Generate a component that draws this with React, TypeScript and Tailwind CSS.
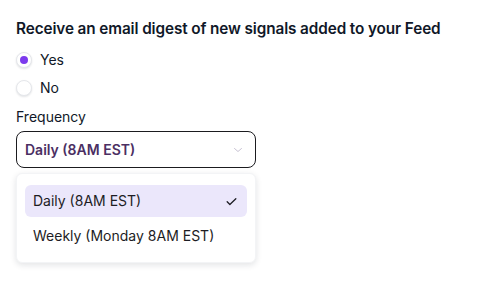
import { useState } from "react";

const options = ["Daily (8AM EST)", "Weekly (Monday 8AM EST)"];

export default function App() {
  const [enabled, setEnabled] = useState(true);
  const [frequency, setFrequency] = useState(options[0]);

  return (
    <div className="min-h-screen bg-white px-4 pt-[17px] font-['Inter',sans-serif] text-[#101828]">
      <h2 className="text-[15.3px] font-semibold leading-6 tracking-[-0.1px]">
        Receive an email digest of new signals added to your Feed
      </h2>

      {/* yes / no radios */}
      <div className="mt-[11px] flex flex-col gap-3">
        {[true, false].map((v) => (
          <label key={String(v)} className="flex h-4 cursor-pointer items-center gap-2 text-sm">
            <button
              type="button"
              onClick={() => setEnabled(v)}
              className="flex h-4 w-4 items-center justify-center rounded-full border border-gray-200 bg-white shadow-[0_1px_2px_rgba(16,24,40,0.12)]"
            >
              {enabled === v && <span className="h-2 w-2 rounded-full bg-[#7c3aed]" />}
            </button>
            {v ? "Yes" : "No"}
          </label>
        ))}
      </div>

      <div className="mt-[11px] text-sm leading-5">Frequency</div>

      {/* select */}
      <div className="mt-[4px] w-[240px]">
        <button
          type="button"
          className="flex h-[37px] w-full items-center justify-between rounded-lg border border-[#1b1b1f] bg-white pl-2 pr-[11px] text-sm font-semibold text-[#4b2f63]"
        >
          {frequency}
          <svg width="12" height="12" viewBox="0 0 24 24" fill="none" stroke="#b9b2c6"
            strokeWidth="1.6" strokeLinecap="round" strokeLinejoin="round" aria-hidden="true">
            <path d="M5 9l7 6 7-6" />
          </svg>
        </button>

        {/* menu */}
        <div className="mt-[5px] flex flex-col gap-[3px] rounded-md border border-gray-100 bg-white px-2 pb-[10px] pt-[11px] shadow-[0_2px_6px_rgba(16,24,40,0.12)]">
          {options.map((o) => (
            <div
              key={o}
              onClick={() => setFrequency(o)}
              className={
                "flex h-8 cursor-pointer items-center justify-between rounded-md pl-2 pr-[9px] text-sm text-[#1d1d24] " +
                (o === frequency ? "bg-[#ebe7fb]" : "")
              }
            >
              {o}
              {o === frequency && (
                <svg width="13" height="13" viewBox="0 0 24 24" fill="none" stroke="#1d1d24"
                  strokeWidth="2.4" strokeLinecap="round" strokeLinejoin="round" aria-hidden="true">
                  <path d="M4 12.5l5 5L20 7" />
                </svg>
              )}
            </div>
          ))}
        </div>
      </div>
    </div>
  );
}
